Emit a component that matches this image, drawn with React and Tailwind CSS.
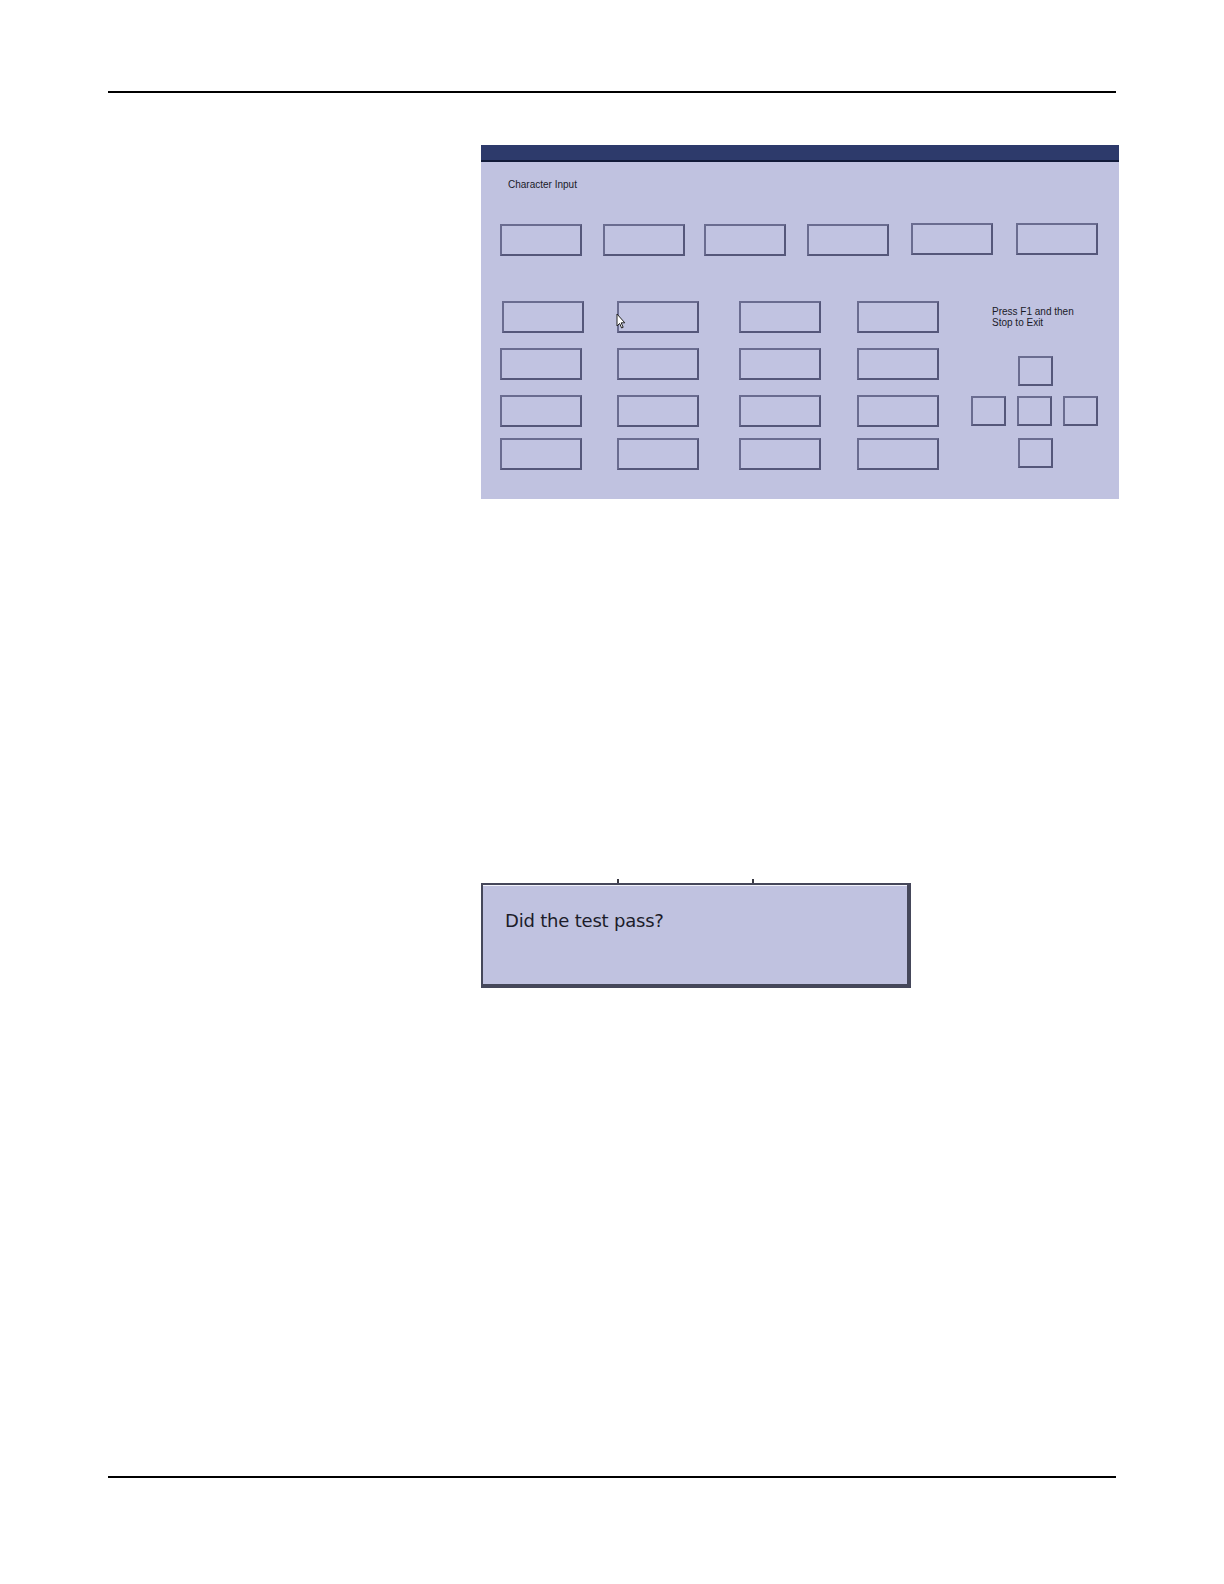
const topRow = [
  "mt-[1px] ml-0",
  "mt-[1px] ml-[21px]",
  "mt-[1px] ml-[19px]",
  "mt-[1px] ml-[21px]",
  "mt-0 ml-[22px]",
  "mt-0 ml-[23px]",
];

function Key({ className = "" }) {
  return (
    <div
      className={`h-[32px] w-[82px] shrink-0 border-2 border-[#55577a] border-l-[#6a6c90] border-t-[#6a6c90] bg-[#c1c3e1] ${className}`}
    />
  );
}

function Pad({ className = "" }) {
  return (
    <div
      className={`h-[30px] w-[35px] shrink-0 border-2 border-[#55577a] border-l-[#6a6c90] border-t-[#6a6c90] bg-[#c1c3e1] ${className}`}
    />
  );
}

function Cursor() {
  return (
    <svg
      className="absolute left-[-1px] top-[12px]"
      width="10"
      height="17"
      viewBox="0 0 10 17"
    >
      <path
        d="M1 1 L1 13 L3.6 10.4 L5.6 15 L7.2 14.3 L5.2 9.8 L8.8 9.8 Z"
        fill="#ffffff"
        stroke="#222"
        strokeWidth="1"
        strokeLinejoin="round"
      />
    </svg>
  );
}

function CharacterScreen() {
  return (
    <div className="h-[354px] w-[638px] bg-[#c0c2e0] font-['Liberation_Sans',Arial,sans-serif] text-[#1a1a28]">
      <div className="h-[17px] border-b-2 border-[#111a38] bg-[#2d3a6b]" />

      <div className="px-[19px]">
        <p className="pt-[17px] pl-[8px] text-[10px] leading-[12px]">
          Character Input
        </p>

        <div className="mt-[32px] flex items-start">
          {topRow.map((cls, i) => (
            <Key key={i} className={cls} />
          ))}
        </div>

        <div className="mt-[45px] flex">
          <div className="flex flex-col gap-[15px] [&>*:nth-child(4)]:mt-[-4px]">
            {[0, 1, 2, 3].map((r) => (
              <div key={r} className="flex">
                <Key className={r === 0 ? "ml-[2px]" : "ml-0"} />
                <div className={`relative ${r === 0 ? "ml-[33px]" : "ml-[35px]"}`}>
                  {r === 0 && <Cursor />}
                  <Key />
                </div>
                <Key className="ml-[40px]" />
                <Key className="ml-[36px]" />
              </div>
            ))}
          </div>

          <div className="ml-[53px] flex flex-col">
            <p className="mt-[5px] text-[10px] leading-[11px]">
              Press F1 and then
              <br />
              Stop to Exit
            </p>
            <div className="ml-[-21px] mt-[28px] flex flex-col items-start">
              <Pad className="ml-[47px]" />
              <div className="mt-[10px] flex gap-[11px]">
                <Pad />
                <Pad />
                <Pad />
              </div>
              <Pad className="ml-[47px] mt-[12px]" />
            </div>
          </div>
        </div>
      </div>
    </div>
  );
}

function PassDialog() {
  return (
    <div className="relative h-[105px] w-[430px]">
      <span className="absolute left-[136px] top-[-4px] h-[4px] w-[2px] bg-[#3a3a44]" />
      <span className="absolute left-[271px] top-[-4px] h-[4px] w-[2px] bg-[#3a3a44]" />
      <div className="h-full w-full border-t-2 border-l-2 border-r-[4px] border-b-[4px] border-[#45475a] bg-[#c0c2e0] shadow-[inset_0_1px_0_#f2f3fb]">
        <p className="pl-[22px] pt-[25px] font-['DejaVu_Sans',Verdana,sans-serif] text-[18px] leading-[22px] tracking-[-0.2px] text-[#1c1c2a]">
          Did the test pass?
        </p>
      </div>
    </div>
  );
}

export default function App() {
  return (
    <div className="min-h-[1584px] w-[1224px] bg-white">
      <div className="px-[108px] pt-[91px]">
        <div className="h-[2px] bg-black" />

        <div className="ml-[373px] mt-[52px]">
          <CharacterScreen />
        </div>

        <div className="ml-[373px] mt-[384px]">
          <PassDialog />
        </div>

        <div className="mt-[488px] h-[2px] bg-black" />
      </div>
    </div>
  );
}
